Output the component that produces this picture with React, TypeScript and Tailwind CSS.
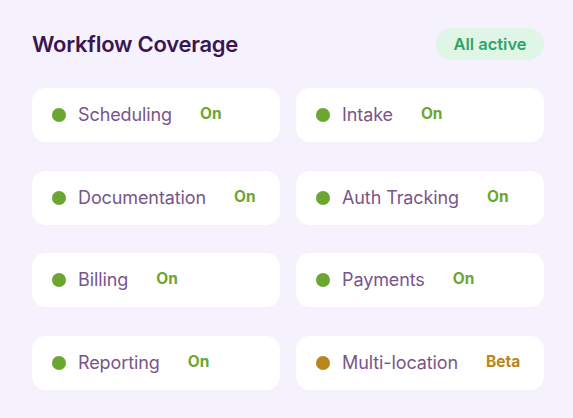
const items: { name: string; status: string; beta?: boolean }[] = [
  { name: "Scheduling", status: "On" },
  { name: "Intake", status: "On" },
  { name: "Documentation", status: "On" },
  { name: "Auth Tracking", status: "On" },
  { name: "Billing", status: "On" },
  { name: "Payments", status: "On" },
  { name: "Reporting", status: "On" },
  { name: "Multi-location", status: "Beta", beta: true },
];

export default function App() {
  return (
    <div
      className="w-[573px] h-[418px] bg-[#f5f2fd] pl-8 pt-7"
      style={{ fontFamily: "Inter, 'Noto Sans', sans-serif" }}
    >
      <div className="w-[512px]">
        <div className="flex items-center justify-between h-8 mb-7">
          <h1 className="text-[22px] font-semibold text-[#3a1650] tracking-[-0.25px]">
            Workflow Coverage
          </h1>
          <span className="h-8 w-[108px] justify-center rounded-full bg-[#dff5e6] text-[#2fa565] text-[16.5px] font-semibold flex items-center">
            All active
          </span>
        </div>
        <div className="grid grid-cols-2 gap-x-4 gap-y-[28.67px]">
          {items.map((it) => (
            <div
              key={it.name}
              className="h-[54px] bg-white rounded-[14px] flex items-center pl-5"
            >
              <span
                className={
                  "w-[14px] h-[14px] rounded-full shrink-0 " +
                  (it.beta ? "bg-[#b8861b]" : "bg-[#6aa630]")
                }
              />
              <span className="ml-3 text-[18px] leading-6 text-[#7a5589] tracking-[-0.1px]">
                {it.name}
              </span>
              <span
                className={
                  "ml-7 text-[15.5px] leading-6 font-bold mb-[2px] " +
                  (it.beta ? "text-[#b8861b]" : "text-[#6aa630]")
                }
              >
                {it.status}
              </span>
            </div>
          ))}
        </div>
      </div>
    </div>
  );
}
